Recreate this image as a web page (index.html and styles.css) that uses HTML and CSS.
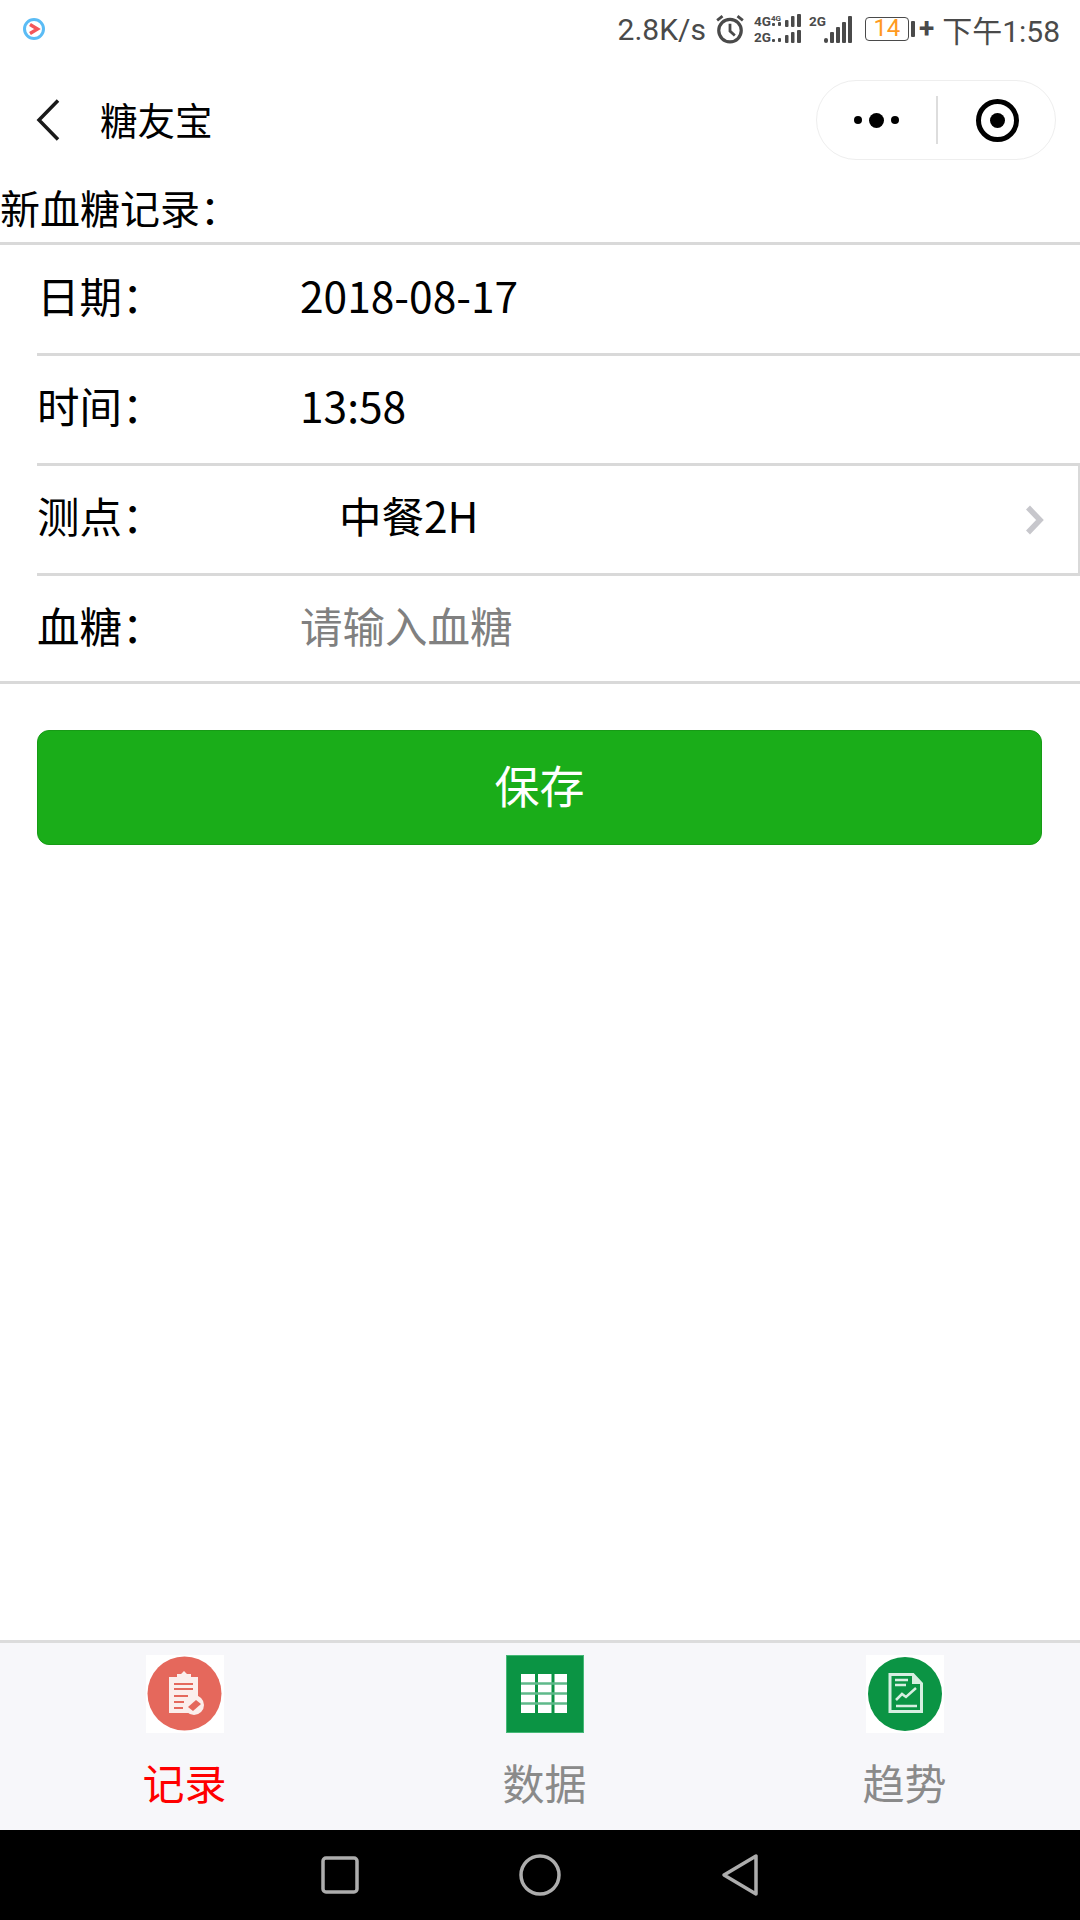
FILE: index.html
```html
<!DOCTYPE html>
<html lang="zh-CN">
<head>
    <meta charset="UTF-8">
    <title>糖友宝</title>
    <link rel="stylesheet" href="styles.css">
</head>
<body>
<div class="phone">
    <div class="status">
        <svg class="app-icon" width="24" height="24" viewBox="0 0 24 24">
            <circle cx="12" cy="12" r="9.5" fill="#fff" stroke="#5bbcf5" stroke-width="3"/>
            <path d="M8 7.500l7.500 4.500-7.500 4.500" fill="none" stroke="#f4565a" stroke-width="3.400"/>
        </svg>
        <span class="speed">2.8K/s</span>
        <svg class="alarm" width="30" height="30" viewBox="0 0 28 28" fill="none" stroke="#4a4a4a">
            <circle cx="14" cy="15.500" r="10.500" stroke-width="3"/>
            <path d="M14 9v7l4.500 4" stroke-width="2.600"/>
            <path d="M2 6l5-4M26 6l-5-4" stroke-width="2.600"/>
        </svg>
        <svg class="sim" width="47" height="36" viewBox="0 -3 47 36" fill="#4a4a4a">
            <text class="sim-text" x="0" y="12">4G</text>
            <text class="sim-text" x="0" y="28">2G</text>
            <text class="sim-tiny" x="17" y="7">4G</text>
            <rect x="18" y="9" width="3" height="3" rx="1"/><rect x="24" y="8" width="3" height="4" rx="1"/>
            <rect x="31" y="6" width="3.500" height="7" rx="1"/><rect x="37" y="2" width="3.500" height="11" rx="1"/><rect x="43" y="0" width="4" height="13" rx="1"/>
            <rect x="18" y="25" width="3" height="3" rx="1"/><rect x="24" y="24" width="3" height="4" rx="1"/>
            <rect x="31" y="21" width="3.500" height="8" rx="1"/><rect x="37" y="18" width="3.500" height="11" rx="1"/><rect x="43" y="16" width="4" height="13" rx="1"/>
        </svg>
        <svg class="signal" width="43" height="36" viewBox="0 -3 43 36" fill="#4a4a4a">
            <text class="sim-text" x="0" y="12">2G</text>
            <rect x="15" y="24" width="4" height="5" rx="2"/><rect x="21" y="18" width="4" height="11" rx="1"/>
            <rect x="27" y="13" width="4" height="16" rx="1"/><rect x="33" y="8" width="4" height="21" rx="1"/><rect x="39" y="2" width="4" height="27" rx="1"/>
        </svg>
        <span class="battery">14</span>
        <span class="battery-nub"></span>
        <span class="plus">+</span>
        <span class="clock">下午1:58</span>
    </div>

    <div class="nav">
        <svg class="back" width="24" height="42" viewBox="0 0 24 42" fill="none">
            <path d="M22 1.500L3 21l19 19.500" stroke="#1a1a1a" stroke-width="3.500"/>
        </svg>
        <span class="nav-title">糖友宝</span>
        <div class="capsule">
            <div class="capsule-dots">
                <i class="dot"></i><i class="dot dot-big"></i><i class="dot"></i>
            </div>
            <i class="capsule-line"></i>
            <div class="capsule-target"><i></i></div>
        </div>
    </div>

    <div class="heading">新血糖记录：</div>

    <div class="form">
        <div class="row row-first">
            <span class="label">日期：</span>
            <span class="value">2018-08-17</span>
        </div>
        <div class="row">
            <span class="label">时间：</span>
            <span class="value">13:58</span>
        </div>
        <div class="row row-picker">
            <span class="label">测点：</span>
            <span class="value value-picked">中餐2H</span>
            <svg class="arrow" width="20" height="30" viewBox="0 0 20 30" fill="none">
                <path d="M3 2.500L15 15 3 27.500" stroke="#c7c7cc" stroke-width="5.500"/>
            </svg>
        </div>
        <div class="row row-last">
            <span class="label">血糖：</span>
            <span class="value value-empty">请输入血糖</span>
        </div>
    </div>

    <div class="save">保存</div>

    <div class="spacer"></div>

    <div class="tabs">
        <div class="tab tab-on">
            <svg class="tab-icon" width="78" height="78" viewBox="0 0 78 78">
                <rect width="78" height="78" fill="#fff"/>
                <circle cx="38.500" cy="38.500" r="37" fill="#e5685c"/>
                <path d="M23 22h8v-3h4l3-3 3 3h4v3h7v36H23z" fill="#fbeeec"/>
                <path d="M28 29h19M28 34h19M28 41h14M28 47h10M28 53h9" stroke="#e5685c" stroke-width="2"/>
                <circle cx="48" cy="50" r="10" fill="#fbeeec"/>
                <path d="M42 52l8-7 5 4-8 7z" fill="#e5685c"/>
            </svg>
            <span class="tab-text">记录</span>
        </div>
        <div class="tab">
            <svg class="tab-icon" width="78" height="78" viewBox="0 0 78 78">
                <rect x="0.500" y="0.500" width="77" height="77" fill="#0b9444" stroke="#45b877"/>
                <rect x="15" y="19" width="46" height="39" fill="#fff"/>
                <path d="M30.500 19v39M47 19v39" stroke="#0b9444" stroke-width="3"/>
                <path d="M15 28.500h46M15 38.500h46M15 48.500h46" stroke="#5fb98a" stroke-width="2.500"/>
            </svg>
            <span class="tab-text">数据</span>
        </div>
        <div class="tab">
            <svg class="tab-icon" width="78" height="78" viewBox="0 0 78 78">
                <rect width="78" height="78" fill="#fff"/>
                <circle cx="39" cy="39" r="37" fill="#0b9444"/>
                <path d="M24 19.500h23l8.500 9v28H24z" fill="none" stroke="#d7efe1" stroke-width="3"/>
                <path d="M46 19v10h10z" fill="#d7efe1"/>
                <path d="M29 25h13M29 30h11M30 51h21" stroke="#d7efe1" stroke-width="2.500"/>
                <path d="M30 45l6-6 4 3 10-9" fill="none" stroke="#d7efe1" stroke-width="2.500"/>
            </svg>
            <span class="tab-text">趋势</span>
        </div>
    </div>

    <div class="softkeys">
        <svg width="38" height="38" viewBox="0 0 38 38" fill="none">
            <rect x="2" y="2" width="34" height="34" rx="3" stroke="#adadad" stroke-width="3.500"/>
        </svg>
        <svg width="42" height="42" viewBox="0 0 42 42" fill="none">
            <circle cx="21" cy="21" r="19" stroke="#adadad" stroke-width="3.500"/>
        </svg>
        <svg width="38" height="44" viewBox="0 0 38 44" fill="none">
            <path d="M35 3v38L3 22z" stroke="#adadad" stroke-width="3.500" stroke-linejoin="round"/>
        </svg>
    </div>
</div>
</body>
</html>
```

FILE: styles.css
```css
html, body {
    margin: 0;
    padding: 0;
}

.phone {
    display: flex;
    flex-direction: column;
    width: 1080px;
    height: 1920px;
    overflow: hidden;
    background: #fff;
    color: #000;
    font-family: "Noto Sans CJK SC", "Noto Sans", sans-serif;
}

/* 状态栏 */
.status {
    display: flex;
    align-items: center;
    box-sizing: border-box;
    height: 60px;
    padding: 0 20px 2px 22px;
    color: #4a4a4a;
    font-family: Roboto, "Noto Sans CJK SC", sans-serif;
}

.app-icon {
    margin-right: auto;
}

.speed {
    font-size: 30px;
    margin-right: 9px;
}

.alarm {
    margin-right: 9px;
}

.sim {
    margin-right: 8px;
}

.sim-text {
    font-family: Roboto, sans-serif;
    font-size: 13.500px;
    font-weight: 700;
}

.sim-tiny {
    font-family: Roboto, sans-serif;
    font-size: 8px;
    font-weight: 700;
}

.signal {
    margin-right: 13px;
}

.battery {
    box-sizing: border-box;
    width: 44px;
    height: 24px;
    border: 1.500px solid #4a4a4a;
    border-radius: 4px;
    color: #ff9a1f;
    font-size: 24px;
    line-height: 21px;
    text-align: center;
}

.battery-nub {
    width: 4px;
    height: 16px;
    margin-left: 2px;
    border-radius: 1px;
    background: #4a4a4a;
}

.plus {
    margin: 0 8px 0 4px;
    font-size: 28px;
    font-weight: 700;
    line-height: 28px;
}

.clock {
    font-size: 30px;
}

/* 小程序导航 */
.nav {
    display: flex;
    align-items: center;
    box-sizing: border-box;
    height: 120px;
    padding: 0 24px 0 36px;
}

.nav-title {
    margin: 0 0 4px 40px;
    font-size: 37.500px;
}

.capsule {
    display: flex;
    align-items: center;
    box-sizing: border-box;
    width: 240px;
    height: 80px;
    margin-left: auto;
    border: 1.500px solid #eeeeee;
    border-radius: 40px;
}

.capsule-dots {
    display: flex;
    align-items: center;
    justify-content: center;
    gap: 7px;
    width: 119px;
}

.dot {
    width: 8px;
    height: 8px;
    border-radius: 50%;
    background: #000;
}

.dot-big {
    width: 15px;
    height: 15px;
}

.capsule-line {
    width: 1.500px;
    height: 48px;
    background: #dddddd;
}

.capsule-target {
    display: flex;
    align-items: center;
    justify-content: center;
    box-sizing: border-box;
    width: 43px;
    height: 43px;
    margin-left: 38px;
    border: 5px solid #000;
    border-radius: 50%;
}

.capsule-target i {
    width: 15px;
    height: 15px;
    border-radius: 50%;
    background: #000;
}

.heading {
    height: 62px;
    font-size: 40px;
    line-height: 54px;
}

/* 表单 */
.form {
    border-top: 3px solid #d9d9d9;
    border-bottom: 3px solid #d9d9d9;
}

.row {
    display: flex;
    align-items: center;
    box-sizing: border-box;
    height: 110px;
    margin-left: 37px;
    padding-bottom: 11px;
    font-size: 42.500px;
}

.row + .row {
    border-top: 3px solid #d9d9d9;
}

.row-first {
    height: 108px;
    padding-bottom: 9px;
}

.row-last {
    height: 108px;
    padding-bottom: 8px;
}

.row-picker {
    padding-right: 33px;
    border-right: 2px solid #d9d9d9;
}

.label {
    width: 263px;
}

.value-picked {
    margin-left: 39px;
}

.value-empty {
    color: #808080;
}

.arrow {
    margin: 11px 0 0 auto;
}

.save {
    box-sizing: border-box;
    width: 1005px;
    height: 115px;
    margin: 46px 0 0 37px;
    border: 1.500px solid #179b16;
    border-radius: 12px;
    background: #1aad19;
    color: #fff;
    font-size: 45px;
    line-height: 108px;
    text-align: center;
}

.spacer {
    flex: 1;
}

/* 底部 tab */
.tabs {
    display: grid;
    grid-template-columns: repeat(3, 1fr);
    box-sizing: border-box;
    height: 190px;
    border-top: 3px solid #dcdcdc;
    background: #f7f7fa;
}

.tab {
    display: flex;
    flex-direction: column;
    align-items: center;
    padding: 12px 0 0 9px;
    color: #8a8a8a;
}

.tab-on {
    color: #ff0000;
}

.tab-icon {
    display: block;
    filter: blur(0.6px);
}

.tab-text {
    margin-top: 19px;
    font-size: 42px;
    line-height: 60px;
}

.softkeys {
    display: flex;
    align-items: center;
    justify-content: center;
    gap: 160px;
    height: 90px;
    background: #000;
}
```
